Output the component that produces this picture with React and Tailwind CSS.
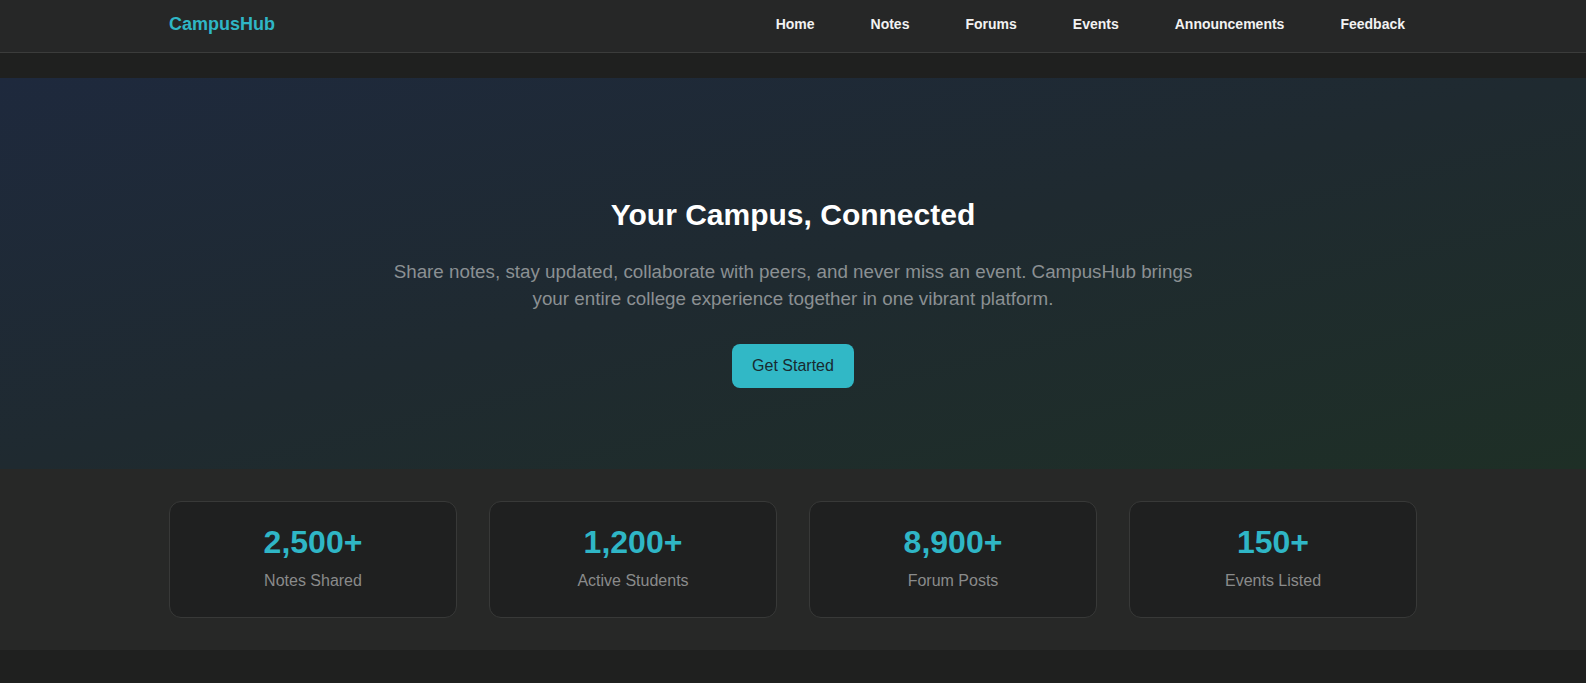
const links = ['Home', 'Notes', 'Forums', 'Events', 'Announcements', 'Feedback']

const stats = [
  { value: '2,500+', label: 'Notes Shared' },
  { value: '1,200+', label: 'Active Students' },
  { value: '8,900+', label: 'Forum Posts' },
  { value: '150+', label: 'Events Listed' },
]

function Navbar() {
  return (
    <header className="border-b border-[#3b3c3b] bg-[#262727]">
      <div className="mx-auto flex h-[52px] max-w-7xl items-center justify-between px-4 pb-1">
        <a className="text-lg font-bold text-[#2fb6c6]">CampusHub</a>
        <nav className="flex items-center gap-8">
          {links.map((l) => (
            <a key={l} className="px-3 text-sm font-bold text-[#f2f2f2]">
              {l}
            </a>
          ))}
        </nav>
      </div>
    </header>
  )
}

function Hero() {
  return (
    <section className="mt-[25px] bg-linear-to-br from-[#1e293d] via-[#1f2a30] to-[#1e2f26] px-4 pt-[119px] pb-[81px] text-center">
      <h1 className="text-3xl leading-9 font-bold text-white">Your Campus, Connected</h1>
      <p className="mx-auto mt-[25px] max-w-[820px] text-[18.8px] leading-[27px] text-[#8b9093]">
        Share notes, stay updated, collaborate with peers, and never miss an event. CampusHub brings your entire college
        experience together in one vibrant platform.
      </p>
      <button className="mt-8 rounded-lg bg-[#31b8c6] px-5 py-2.5 text-base text-[#182a30]">Get Started</button>
    </section>
  )
}

function StatCard({ value, label }) {
  return (
    <div className="rounded-xl border border-[#383938] bg-[#1f2020] pt-[21px] pb-[24px] text-center">
      <p className="text-[32px] leading-[38px] font-bold text-[#2fb6c6]">{value}</p>
      <p className="mt-[8px] text-base leading-6 text-[#8a8b8b]">{label}</p>
    </div>
  )
}

export default function App() {
  return (
    <div className="min-h-[683px] bg-[#1f201f] font-['Liberation_Sans',Arial,sans-serif]">
      <Navbar />
      <Hero />
      <section className="bg-[#272827] py-8">
        <div className="mx-auto grid max-w-7xl grid-cols-4 gap-8 px-4">
          {stats.map((s) => (
            <StatCard key={s.label} {...s} />
          ))}
        </div>
      </section>
    </div>
  )
}
